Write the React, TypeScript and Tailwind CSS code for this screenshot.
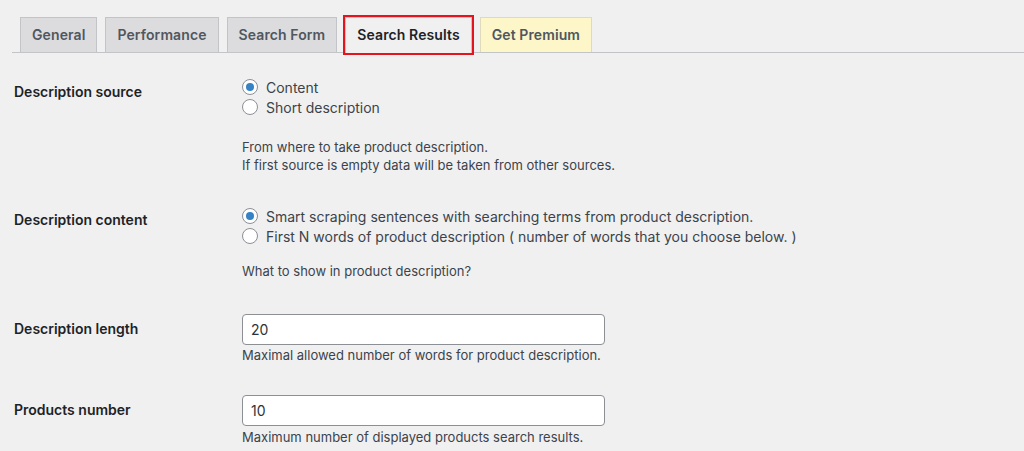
import React from 'react';

const tabs = [
  { label: 'General' },
  { label: 'Performance' },
  { label: 'Search Form' },
  { label: 'Search Results', active: true },
  { label: 'Get Premium', premium: true },
];

function Radio({ checked, label }: { checked?: boolean; label: string }) {
  return (
    <label className="flex items-center h-[20px] text-[14px] text-[#3c434a]">
      <span className="w-[16px] h-[16px] rounded-full border border-[#8c8f94] bg-white flex items-center justify-center shrink-0">
        {checked && <span className="w-[8px] h-[8px] rounded-full bg-[#3582c4]" />}
      </span>
      <span className="ml-[8px]">{label}</span>
    </label>
  );
}

function Row({
  label,
  children,
  className = '',
}: {
  label: string;
  children: React.ReactNode;
  className?: string;
}) {
  return (
    <div className={`flex items-start ${className}`}>
      <div className="w-[228px] shrink-0 pt-[20px] text-[14px] leading-[18px] font-semibold text-[#1d2327]">
        {label}
      </div>
      <div className="pt-[14px]">{children}</div>
    </div>
  );
}

export default function App() {
  return (
    <div
      className="min-h-screen bg-[#f0f0f1] pl-[12px] overflow-hidden"
      style={{ fontFamily: 'Inter, "Liberation Sans", Arial, sans-serif' }}
    >
      {/* Tabs */}
      <div className="flex items-end pt-[17px] border-b border-[#c3c4c7]">
        {tabs.map((t) => (
          <div
            key={t.label}
            className={`ml-[8px] px-[11px] py-[5px] text-[14px] leading-[24px] font-semibold tracking-[0.1px] border border-b-0 ${
              t.active
                ? 'bg-[#f0f0f1] border-[#c3c4c7] text-[#1d2327] mb-[-1px] pb-[6px] outline-2 outline-[#e5131d]'
                : t.premium
                ? 'bg-[#fcf6c8] border-[#dedaba] text-[#50575e]'
                : 'bg-[#dcdcde] border-[#c3c4c7] text-[#50575e]'
            }`}
          >
            {t.label}
          </div>
        ))}
      </div>

      {/* Settings */}
      <div className="mt-[10px] pl-[2px]">
        <Row label="Description source" className="pb-[17px]">
          <Radio checked label="Content" />
          <Radio label="Short description" />
          <p className="mt-[21px] text-[13px] leading-[18px] text-[#3c434a]">
            From where to take product description.
            <br />
            If first source is empty data will be taken from other sources.
          </p>
        </Row>

        <Row label="Description content" className="pb-[20px]">
          <div className="pt-[1px]">
            <Radio checked label="Smart scraping sentences with searching terms from product description." />
            <Radio label="First N words of product description ( number of words that you choose below. )" />
          </div>
          <p className="mt-[16px] text-[13px] leading-[18px] text-[#3c434a]">
            What to show in product description?
          </p>
        </Row>

        <Row label="Description length" className="pb-[17px]">
          <input
            type="text"
            defaultValue="20"
            className="block w-[363px] h-[31px] px-[8px] bg-white border border-[#8c8f94] rounded-[4px] text-[14px] text-[#2c3338] outline-none"
          />
          <p className="mt-[1px] text-[13px] leading-[18px] text-[#3c434a]">
            Maximal allowed number of words for product description.
          </p>
        </Row>

        <Row label="Products number">
          <input
            type="text"
            defaultValue="10"
            className="block w-[363px] h-[31px] px-[8px] bg-white border border-[#8c8f94] rounded-[4px] text-[14px] text-[#2c3338] outline-none"
          />
          <p className="mt-[2px] text-[13px] leading-[18px] text-[#3c434a]">
            Maximum number of displayed products search results.
          </p>
        </Row>
      </div>
    </div>
  );
}
